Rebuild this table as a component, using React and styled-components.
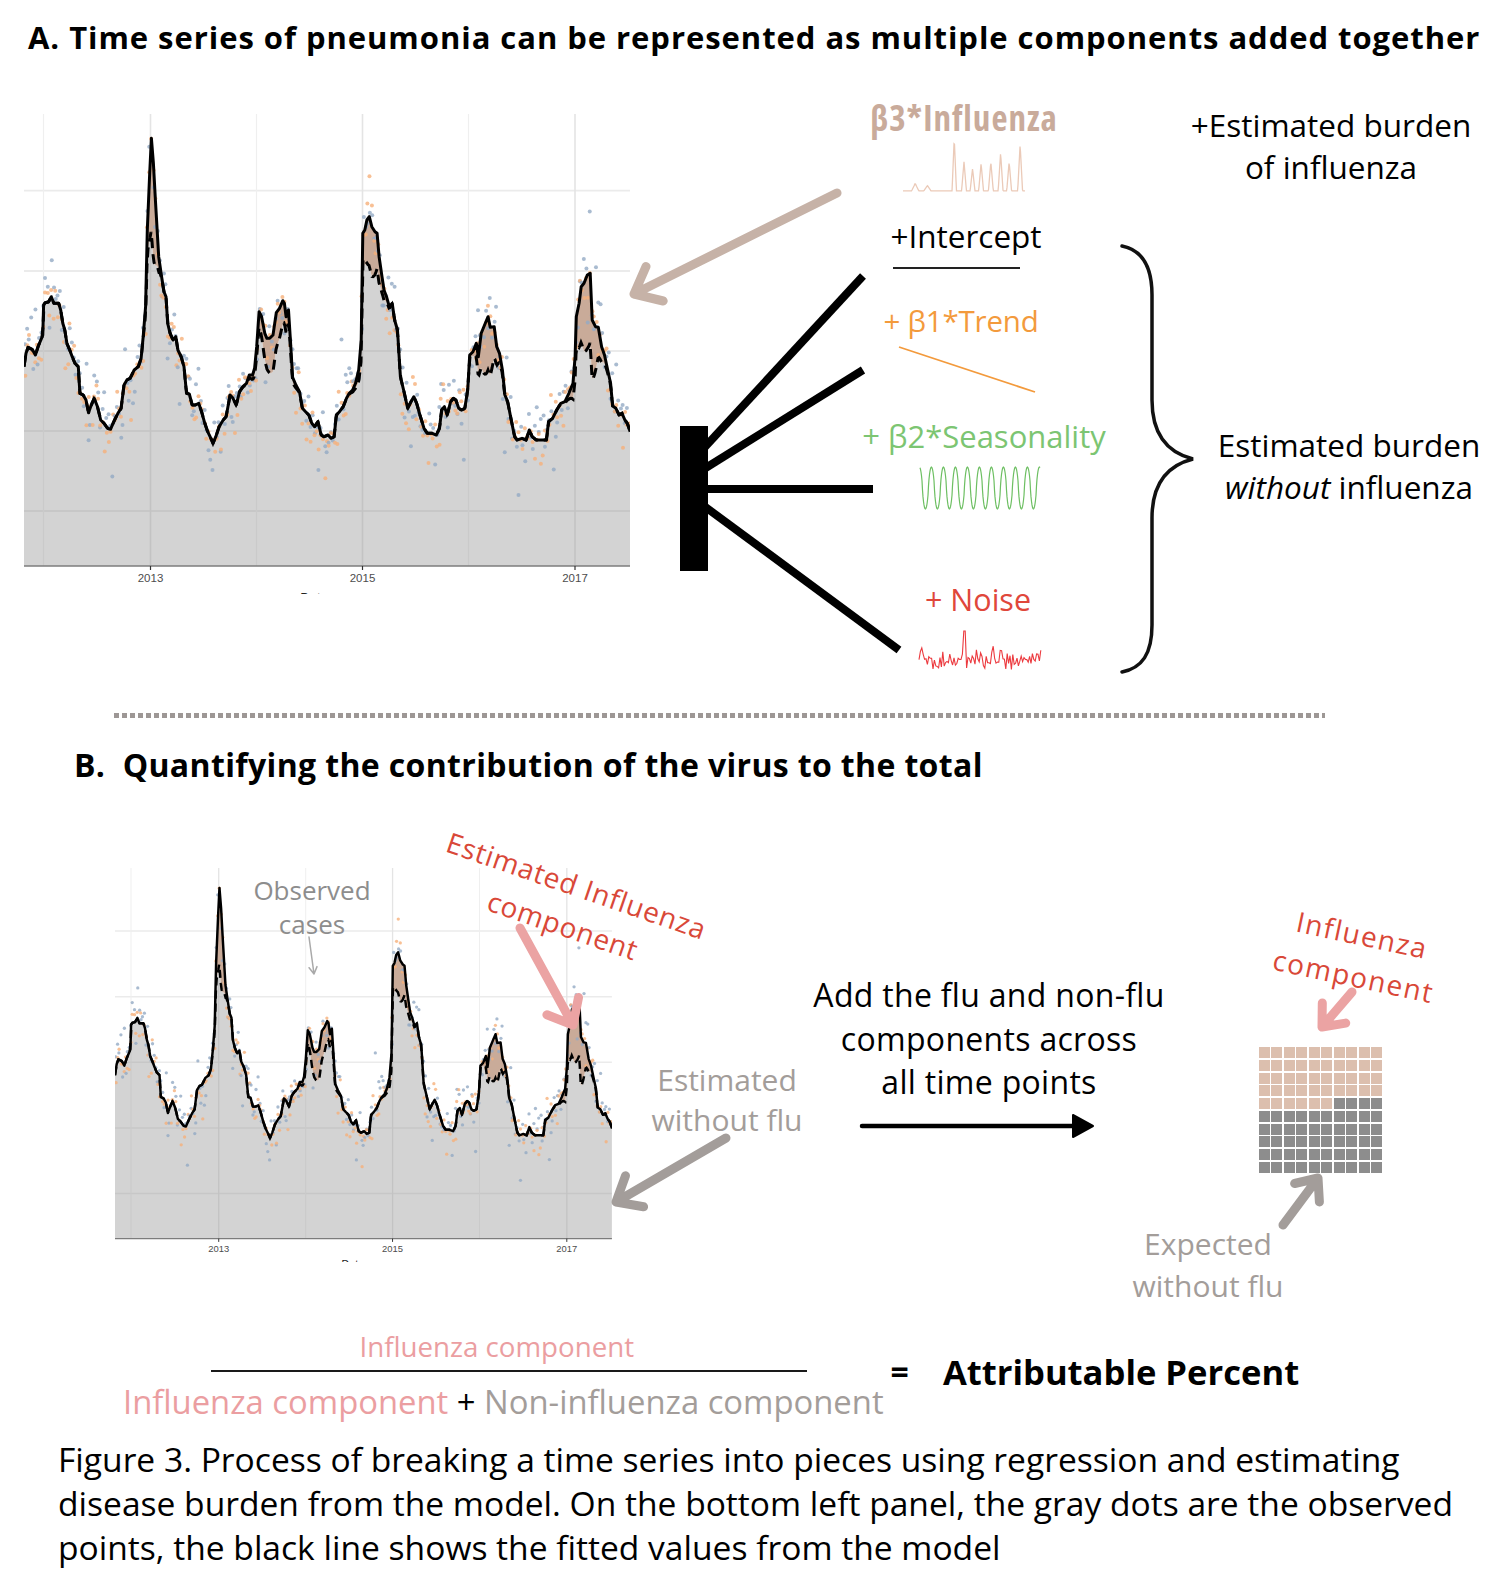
import React from 'react';
import styled, { createGlobalStyle } from 'styled-components';

const Global = createGlobalStyle`
  html, body { margin: 0; padding: 0; background: #fff; }
  body { font-family: "Open Sans", "Noto Sans", sans-serif; color: #000; }
`;

// fitted line, traced off the original plot
const RAW = [
  [60,830],[65,790],[70,772],[80,778],[88,795],[95,768],[103,745],[106,735],[108,645],[112,638],[120,636],[127,620],[133,640],[145,640],[150,660],[155,700],[160,720],[165,760],[172,780],[178,800],[185,820],[193,830],[197,910],[205,915],[212,930],[218,968],[225,945],[232,925],[240,950],[248,990],[256,1000],[265,1015],[272,1018],[280,995],[290,970],[298,955],[305,885],[312,870],[320,865],[330,840],[340,830],[347,805],[352,740],[358,650],[362,420],[368,250],[372,145],[377,220],[382,330],[390,500],[397,560],[403,605],[408,620],[412,700],[418,730],[425,750],[432,740],[437,780],[445,800],[452,830],[458,910],[465,912],[472,945],[480,945],[488,940],[495,965],[503,1000],[510,1025],[518,1045],[523,1060],[530,1040],[538,1010],[548,990],[555,980],[565,915],[572,925],[580,945],[588,905],[596,890],[605,880],[612,855],[620,855],[625,835],[630,770],[636,665],[642,680],[650,730],[655,745],[662,745],[670,735],[678,668],[686,655],[694,632],[698,640],[702,680],[708,660],[713,755],[718,862],[726,885],[735,905],[742,955],[750,965],[758,975],[765,1000],[772,1010],[780,995],[788,1035],[795,1040],[805,1035],[812,1045],[820,1040],[825,975],[833,965],[842,950],[850,925],[857,910],[865,900],[872,880],[880,840],[886,750],[890,430],[895,420],[900,390],[906,380],[912,410],[920,425],[925,430],[930,500],[937,560],[942,600],[948,620],[955,650],[962,640],[968,690],[975,720],[982,860],[990,900],[1000,955],[1008,935],[1015,920],[1022,940],[1030,975],[1040,1015],[1048,1030],[1060,1030],[1070,1035],[1078,1015],[1083,960],[1090,950],[1097,975],[1105,935],[1112,925],[1118,930],[1125,955],[1132,960],[1140,955],[1147,900],[1152,795],[1160,785],[1168,760],[1173,800],[1180,730],[1190,700],[1197,680],[1202,712],[1212,710],[1218,770],[1225,790],[1232,840],[1238,915],[1245,935],[1252,980],[1262,1040],[1268,1050],[1280,1045],[1290,1050],[1298,1020],[1305,1040],[1315,1050],[1328,1050],[1340,1050],[1345,995],[1355,985],[1365,960],[1375,940],[1385,935],[1395,910],[1405,880],[1410,800],[1413,680],[1420,640],[1425,590],[1432,580],[1440,555],[1447,550],[1452,690],[1460,710],[1467,712],[1475,770],[1482,795],[1490,840],[1497,880],[1502,948],[1510,955],[1518,975],[1525,970],[1532,990],[1538,1000],[1545,1025],
];

const W = 606;
const H = 480;
const AXIS = 452;
const toX = zx => zx * 0.4082 - 24.5;
const LINE = RAW.map(([zx, zy]) => [toX(zx), zy / 3 - 24]);
// flu seasons: centre, height, width
const FLU = [[375, 290, 8], [670, 110, 25], [910, 150, 18], [1195, 160, 16], [1440, 220, 20]]
  .map(([c, a, s]) => [toX(c), a / 3, s * 0.4082]);

const yAt = x => {
  for (let i = 1; i < LINE.length; i++) {
    const [x0, y0] = LINE[i - 1];
    const [x1, y1] = LINE[i];
    if (x <= x1) return y0 + (y1 - y0) * ((x - x0) / (x1 - x0 || 1));
  }
  return LINE[LINE.length - 1][1];
};
const fluAt = x => FLU.reduce((t, [c, a, s]) => t + a * Math.exp(-((x - c) ** 2) / (2 * s * s)), 0);

const rng = seed => () => {
  seed |= 0; seed = (seed + 0x6d2b79f5) | 0;
  let t = Math.imul(seed ^ (seed >>> 15), 1 | seed);
  t = (t + Math.imul(t ^ (t >>> 7), 61 | t)) ^ t;
  return ((t ^ (t >>> 14)) >>> 0) / 4294967296;
};
const gauss = r => Math.sqrt(-2 * Math.log(r() + 1e-9)) * Math.cos(2 * Math.PI * r());

const toPath = pts => 'M' + pts.map(([x, y]) => `${x.toFixed(1)},${y.toFixed(1)}`).join('L');

const XS = Array.from({ length: W + 1 }, (_, i) => i);
const DASHED = XS.map(x => [x, Math.min(AXIS, yAt(x) + fluAt(x))]);
const SOLID = XS.map(x => [x, yAt(x)]);
const solidPath = toPath(LINE);
const dashedPath = toPath(DASHED);
const areaPath = `M0,${AXIS}L` + toPath(DASHED).slice(1) + `L${W},${AXIS}Z`;
const fluPath = toPath(SOLID) + 'L' + toPath([...DASHED].reverse()).slice(1) + 'Z';

const DOTS = (() => {
  const r = rng(11);
  const out = [];
  for (let x = 1; x < W; x += 2.04) {
    const base = yAt(x);
    const spread = r() < 0.2 ? 30 : 14;
    out.push([x + (r() - 0.5), base + gauss(r) * spread - 4, 'b']);
    out.push([x + (r() - 0.5), base + gauss(r) * 13 + 3, 'o']);
  }
  return out.filter(([, y]) => y > 0 && y < AXIS - 2);
})();

const H_GRID = [76.7, 157, 237, 317, 397];
const V_GRID = [[19.5, false], [126.5, true], [232.5, false], [338.5, true], [444.5, false], [551, true]];
const YEARS = [[126.5, '2013'], [338.5, '2015'], [551, '2017']];

const ChartSvg = styled.svg`
  display: block;
  overflow: hidden;
  flex: none;
`;

const SeriesChart = ({ scale = 1 }) => (
  <ChartSvg width={W * scale} height={H * scale} viewBox={`0 0 ${W} ${H}`}>
    {H_GRID.map(y => <line key={y} x1={0} x2={W} y1={y} y2={y} stroke="#ebebeb" strokeWidth={1.8} />)}
    {V_GRID.map(([x, major]) => (
      <line key={x} x1={x} x2={x} y1={0} y2={AXIS} stroke={major ? '#e4e4e4' : '#efefef'} strokeWidth={major ? 1.6 : 1.2} />
    ))}
    <path d={areaPath} fill="rgba(150,150,150,0.42)" />
    <path d={fluPath} fill="#c9ab99" />
    {DOTS.map(([x, y, c], i) => (
      <circle key={i} cx={x} cy={y} r={2} fill={c === 'b' ? '#93aac4' : '#f6b07a'} opacity={0.8} />
    ))}
    <path d={dashedPath} fill="none" stroke="#000" strokeWidth={3} strokeDasharray="10 6" />
    <path d={solidPath} fill="none" stroke="#000" strokeWidth={3} strokeLinejoin="round" />
    <line x1={0} x2={W} y1={AXIS} y2={AXIS} stroke="#7c7c7c" strokeWidth={1.6} />
    {YEARS.map(([x, t]) => (
      <g key={t}>
        <line x1={x} x2={x} y1={AXIS} y2={AXIS + 4} stroke="#333" strokeWidth={1.2} />
        <text x={x} y={AXIS + 16} textAnchor="middle" fontSize="11.5" fill="#4d4d4d" fontFamily='"Liberation Sans", sans-serif'>{t}</text>
      </g>
    ))}
    <text x={290} y={488} textAnchor="middle" fontSize="13" fill="#222" fontFamily='"Liberation Sans", sans-serif'>Date</text>
  </ChartSvg>
);

// small component sketches
const spikePath = (() => {
  const spikes = [[0.1, 0.14, 0.03], [0.2, 0.1, 0.03], [0.42, 1, 0.018], [0.5, 0.55, 0.02], [0.57, 0.42, 0.02], [0.64, 0.52, 0.02], [0.72, 0.55, 0.02], [0.8, 0.72, 0.02], [0.87, 0.55, 0.02], [0.96, 0.88, 0.02]];
  const pts = [];
  for (let i = 0; i <= 244; i++) {
    const f = i / 244;
    let v = 0.02;
    spikes.forEach(([c, h, s]) => { v += h * Math.max(0, 1 - Math.abs(f - c) / s); });
    pts.push([f * 122, 55 - v * 53]);
  }
  return toPath(pts);
})();

const seasonPath = (() => {
  const pts = [];
  for (let i = 0; i <= 240; i++) {
    const f = i / 240;
    const c = Math.cos(2 * Math.PI * 10 * f + 0.3);
    pts.push([f * 120, 23 - 21 * Math.sign(c) * Math.abs(c) ** 0.7]);
  }
  return toPath(pts);
})();

const noisePath = (() => {
  const r = rng(5);
  const pts = [];
  for (let x = 0; x <= 123; x += 1.4) {
    let y = 30 + gauss(r) * 6;
    if (Math.abs(x - 46) < 1.5) y = 2;
    pts.push([x, Math.max(2, Math.min(47, y))]);
  }
  return toPath(pts);
})();

const Arrow = ({ x1, y1, x2, y2, color, w, head = 26, spread = 40 }) => {
  const a = Math.atan2(y2 - y1, x2 - x1);
  const arm = s => {
    const t = a + (s * spread * Math.PI) / 180;
    return `${(x2 - head * Math.cos(t)).toFixed(1)},${(y2 - head * Math.sin(t)).toFixed(1)}`;
  };
  return (
    <path
      d={`M${x1},${y1}L${x2},${y2}M${arm(1)}L${x2},${y2}L${arm(-1)}`}
      stroke={color} strokeWidth={w} fill="none" strokeLinecap="round" strokeLinejoin="round"
    />
  );
};

const Page = styled.div`
  width: 1507px;
  height: 1593px;
  overflow: hidden;
  background: #fff;
`;

const TitleA = styled.h1`
  margin: 0;
  height: 70px;
  box-sizing: border-box;
  padding: 22px 0 0 28px;
  font-size: 31px;
  line-height: 31px;
  font-weight: 700;
  letter-spacing: 0.95px;
  white-space: nowrap;
`;

const PanelA = styled.section`
  display: flex;
  height: 640px;
`;

const ChartSlot = styled.div`
  padding: ${p => p.$pad};
  flex: none;
`;

const Canvas = styled.div`
  position: relative;
  flex: 1;
`;

const Overlay = styled.svg`
  position: absolute;
  left: 0;
  top: 0;
  overflow: visible;
  pointer-events: none;
`;

const Label = styled.div`
  position: absolute;
  left: ${p => p.$x}px;
  top: ${p => p.$y}px;
  transform: translate(-50%, -50%) rotate(${p => p.$rot || 0}deg);
  white-space: nowrap;
  text-align: center;
  color: ${p => p.$color || '#000'};
  font-size: ${p => p.$size || 30}px;
  line-height: ${p => p.$lh || 42}px;
  font-weight: ${p => (p.$bold ? 700 : 400)};
  font-stretch: ${p => p.$stretch || '100%'};
  letter-spacing: ${p => p.$ls || 0}px;
`;

const Sketch = styled.svg`
  position: absolute;
  left: ${p => p.$x}px;
  top: ${p => p.$y}px;
  overflow: visible;
`;

const Separator = styled.div`
  margin: 3px 0 0 114px;
  width: 1211px;
  height: 5px;
  background: repeating-linear-gradient(90deg, #9d9795 0 4.8px, transparent 4.8px 8px);
`;

const TitleB = styled.h2`
  margin: 0;
  height: 82px;
  box-sizing: border-box;
  padding: 31px 0 0 74px;
  font-size: 32px;
  line-height: 32px;
  font-weight: 700;
  letter-spacing: 0.35px;
  white-space: pre;
`;

const PanelB = styled.section`
  position: relative;
  height: 500px;
`;

const Waffle = styled.div`
  position: absolute;
  left: 1259px;
  top: 247px;
  width: 123px;
  height: 126px;
  display: grid;
  grid-template-columns: repeat(10, 1fr);
  grid-template-rows: repeat(10, 1fr);
  gap: 1.6px;
  filter: blur(0.3px);
`;

const Cell = styled.div`
  background: ${p => (p.$flu ? '#dcbfae' : '#8d8d8d')};
`;

const FormulaRow = styled.section`
  display: flex;
  align-items: center;
  height: 120px;
  box-sizing: border-box;
  padding: 30px 0 0 123px;
`;

const Fraction = styled.div`
  display: flex;
  flex-direction: column;
  align-items: center;
`;

const Numerator = styled.div`
  font-size: 27.7px;
  line-height: 34px;
  color: #eb9ea1;
  margin-left: -13px;
  white-space: nowrap;
`;

const FractionBar = styled.div`
  width: 596px;
  height: 2px;
  margin: 7px 0 0 12px;
  background: #1a1a1a;
`;

const Denominator = styled.div`
  margin-top: 10px;
  font-size: 32.8px;
  line-height: 40px;
  white-space: nowrap;
`;

const Part = styled.span`
  color: ${p => p.$color};
`;

const Equals = styled.div`
  margin: 0 0 7px 7px;
  font-size: 32px;
  font-weight: 700;
`;

const Result = styled.div`
  margin: 0 0 7px 34px;
  font-size: 34.6px;
  font-weight: 700;
  white-space: nowrap;
`;

const Caption = styled.p`
  margin: 17px 0 0 58px;
  font-size: 33.6px;
  line-height: 44px;
  white-space: nowrap;
`;

const DiagramA = () => (
  <Canvas>
    <Overlay width="877" height="640">
      <Arrow x1={207} y1={123} x2={4} y2={224} color="#c6b2a7" w={9} head={30} />
      <line x1={263} y1={198} x2={390} y2={198} stroke="#222" strokeWidth={2} />
      <line x1={269} y1={277} x2={405} y2={322} stroke="#f39a3c" strokeWidth={1.8} />
      <rect x={50} y={356} width={28} height={145} fill="#000" />
      <g stroke="#000" strokeWidth={8}>
        <line x1={74} y1={378} x2={233} y2={206} />
        <line x1={74} y1={399} x2={233} y2={300} />
        <line x1={74} y1={419} x2={243} y2={419} />
        <line x1={74} y1={436} x2={269} y2={580} />
      </g>
      <path
        d="M492,176 C512,180 522,196 522,225 L522,330 C522,362 535,382 563,389 C535,396 522,416 522,448 L522,555 C522,584 512,598 492,602"
        fill="none" stroke="#111" strokeWidth={3.5} strokeLinecap="round"
      />
    </Overlay>

    <Label $x={334} $y={48} $size={35} $bold $stretch="75%" $ls={1} $color="#c9ab9b">β3*Influenza</Label>
    <Sketch $x={273} $y={67} width="122" height="56">
      <path d={spikePath} fill="none" stroke="#ebcab8" strokeWidth={1.3} />
    </Sketch>
    <Label $x={701} $y={76} $size={31.5}>+Estimated burden<br />of influenza</Label>

    <Label $x={336} $y={166} $size={31.5}>+Intercept</Label>
    <Label $x={331} $y={251} $size={29.5} $ls={-0.2} $color="#f39a3c">+ β1*Trend</Label>
    <Label $x={354} $y={366} $size={31} $color="#7cc572">+ β2*Seasonality</Label>
    <Sketch $x={290} $y={395} width="120" height="46">
      <path d={seasonPath} fill="none" stroke="#6dbf62" strokeWidth={1.2} />
    </Sketch>
    <Label $x={348} $y={529} $size={30.5} $color="#e0473b">+ Noise</Label>
    <Sketch $x={289} $y={559} width="123" height="49">
      <path d={noisePath} fill="none" stroke="#ec3a3f" strokeWidth={1.1} />
    </Sketch>

    <Label $x={719} $y={396} $size={31.5}>
      Estimated burden<br /><i>without</i> influenza
    </Label>
  </Canvas>
);

const DiagramB = () => (
  <PanelB>
    <ChartSlot $pad="68px 0 0 115px">
      <SeriesChart scale={0.82} />
    </ChartSlot>

    <Label $x={312} $y={107} $size={26} $lh={34} $color="#8d8d8d">Observed<br />cases</Label>
    <Label $x={570} $y={105} $size={28} $rot={19} $ls={0.8} $color="#d94838">Estimated Influenza<br />component</Label>
    <Label $x={727} $y={300} $size={30} $lh={40} $color="#a39d9a">Estimated<br />without flu</Label>
    <Label $x={989} $y={238} $size={32} $lh={43.5} $ls={0.3}>Add the flu and non-flu<br />components across<br />all time points</Label>
    <Label $x={1358} $y={155} $size={28} $rot={12} $ls={1.5} $color="#d94838">Influenza<br />component</Label>
    <Label $x={1208} $y={465} $size={30} $color="#a39d9a">Expected<br />without flu</Label>

    <Waffle>
      {Array.from({ length: 100 }, (_, i) => <Cell key={i} $flu={i < 46} />)}
    </Waffle>

    <Overlay width="1507" height="500">
      <Arrow x1={309} y1={137} x2={314} y2={174} color="#a9a9a9" w={1.5} head={8} spread={30} />
      <Arrow x1={520} y1={128} x2={573} y2={225} color="#eba3a3" w={9} head={28} />
      <Arrow x1={726} y1={338} x2={616} y2={402} color="#a39d9a" w={9} head={28} />
      <line x1={862} y1={326} x2={1076} y2={326} stroke="#000" strokeWidth={4.5} strokeLinecap="round" />
      <path d="M1093,326 L1073,315 L1073,337 Z" fill="#000" stroke="#000" strokeWidth={2} strokeLinejoin="round" />
      <Arrow x1={1352} y1={192} x2={1322} y2={227} color="#eba3a3" w={9} head={24} />
      <Arrow x1={1283} y1={425} x2={1318} y2={378} color="#a39d9a" w={9} head={24} />
    </Overlay>
  </PanelB>
);

export default function App() {
  return (
    <Page>
      <Global />
      <TitleA>A. Time series of pneumonia can be represented as multiple components added together</TitleA>
      <PanelA>
        <ChartSlot $pad="44px 0 0 24px">
          <SeriesChart />
        </ChartSlot>
        <DiagramA />
      </PanelA>
      <Separator />
      <TitleB>{'B.  Quantifying the contribution of the virus to the total'}</TitleB>
      <DiagramB />
      <FormulaRow>
        <Fraction>
          <Numerator>Influenza component</Numerator>
          <FractionBar />
          <Denominator>
            <Part $color="#eb9ea1">Influenza component</Part> + <Part $color="#a39d9a">Non-influenza component</Part>
          </Denominator>
        </Fraction>
        <Equals>=</Equals>
        <Result>Attributable Percent</Result>
      </FormulaRow>
      <Caption>
        Figure 3. Process of breaking a time series into pieces using regression and estimating<br />
        disease burden from the model. On the bottom left panel, the gray dots are the observed<br />
        points, the black line shows the fitted values from the model
      </Caption>
    </Page>
  );
}
